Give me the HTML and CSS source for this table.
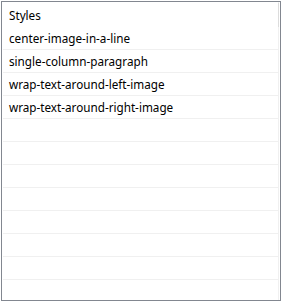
FILE: index.html
```html
<!DOCTYPE html>
<html>
<head>
<meta charset="utf-8">
<link rel="stylesheet" href="styles.css">
</head>
<body>
<div class="listbox">
  <div class="inner">
    <div class="list">
      <div class="header"><span class="cell">Styles</span></div>
      <div class="row"><span class="cell">center-image-in-a-line</span></div>
      <div class="row"><span class="cell">single-column-paragraph</span></div>
      <div class="row"><span class="cell">wrap-text-around-left-image</span></div>
      <div class="row"><span class="cell">wrap-text-around-right-image</span></div>
      <div class="row"></div>
      <div class="row"></div>
      <div class="row"></div>
      <div class="row"></div>
      <div class="row"></div>
      <div class="row"></div>
      <div class="row"></div>
    </div>
    <div class="track"><div class="grip"></div></div>
  </div>
</div>
</body>
</html>
```
FILE: styles.css
```css
html, body {
  margin: 0;
  padding: 0;
  background: #ffffff;
}
body {
  padding: 1px;
  font-family: "Noto Sans", "Open Sans", sans-serif;
  font-size: 11.7px;
  color: #000;
}
.listbox {
  width: 280px;
  height: 300px;
  box-sizing: border-box;
  border: 1px solid #828790;
  background: #fff;
}
.inner {
  display: flex;
  height: 100%;
}
.list {
  flex: 1;
  padding-left: 1px;
  display: flex;
  flex-direction: column;
}
.header {
  height: 25px;
  display: flex;
  align-items: center;
}
.row {
  height: 22px;
  border-bottom: 1px solid #f0f0f0;
  display: flex;
  align-items: center;
}
.cell {
  padding-left: 6px;
  white-space: nowrap;
  line-height: 16px;
}
.track {
  width: 1px;
  margin-right: 1px;
  background: #f0f0f0;
  display: flex;
  flex-direction: column;
}
.grip {
  margin-top: 1px;
  height: 24px;
  background: #dcdcdc;
}
```
